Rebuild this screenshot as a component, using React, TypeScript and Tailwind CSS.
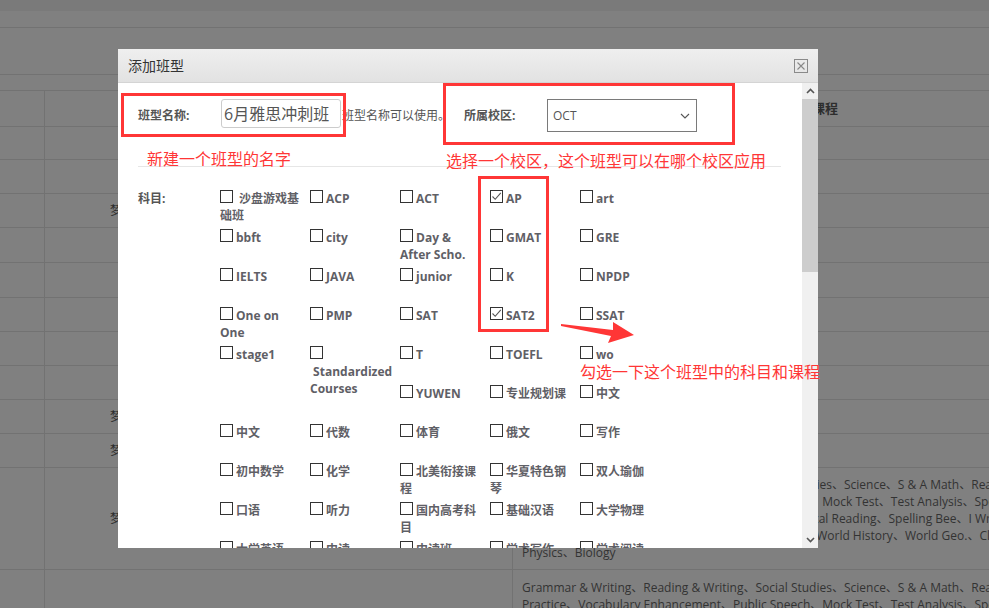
import React from 'react';

type Item = { label: string; checked?: boolean } | null;

const rows: Item[][] = [
  [{ label: '\u00a0沙盘游戏基础班' }, { label: 'ACP' }, { label: 'ACT' }, { label: 'AP', checked: true }, { label: 'art' }],
  [{ label: 'bbft' }, { label: 'city' }, { label: 'Day & After Scho.' }, { label: 'GMAT' }, { label: 'GRE' }],
  [{ label: 'IELTS' }, { label: 'JAVA' }, { label: 'junior' }, { label: 'K' }, { label: 'NPDP' }],
  [{ label: 'One on One' }, { label: 'PMP' }, { label: 'SAT' }, { label: 'SAT2', checked: true }, { label: 'SSAT' }],
  [{ label: 'stage1' }, { label: '\u00a0Standardized Courses' }, { label: 'T' }, { label: 'TOEFL' }, { label: 'wo' }],
  [null, null, { label: 'YUWEN' }, { label: '专业规划课' }, { label: '中文' }],
  [{ label: '中文' }, { label: '代数' }, { label: '体育' }, { label: '俄文' }, { label: '写作' }],
  [{ label: '初中数学' }, { label: '化学' }, { label: '北美衔接课程' }, { label: '华夏特色钢琴' }, { label: '双人瑜伽' }],
  [{ label: '口语' }, { label: '听力' }, { label: '国内高考科目' }, { label: '基础汉语' }, { label: '大学物理' }],
  [{ label: '大学英语' }, { label: '中读' }, { label: '中读班' }, { label: '学术写作' }, { label: '学术阅读' }],
];

// background table rows (heights in px, border included)
const bgRows = [
  { h: 'h-[33px]' },
  { h: 'h-[34px]' },
  { h: 'h-[34px]', name: true },
  { h: 'h-[35px]' },
  { h: 'h-[35px]' },
  { h: 'h-[34px]' },
  { h: 'h-[34px]' },
  { h: 'h-[34px]' },
  { h: 'h-[34px]', name: true },
  { h: 'h-[34px]', name: true },
];

const courseLines = [
  'Grammar & Writing、Reading & Writing、Social Studies、Science、S & A Math、Reading',
  'Practice、Vocabulary Enhancement、Public Speech、Mock Test、Test Analysis、Speaking',
  'Grammar、Reading Comprehension、Writing、Critical Reading、Spelling Bee、I Write',
  'Algebra、Geometry、Creative Writing、US History、World History、World Geo.、Classics',
  'Physics、Biology',
];

const Checkbox = ({ checked }: { checked?: boolean }) => (
  <span className="relative inline-block w-[13px] h-[13px] border border-[#333] bg-white mr-[3px]">
    {checked && (
      <svg className="absolute left-0 top-0" width="11" height="11" viewBox="0 0 11 11">
        <path d="M1.5 5.5 L4.2 8.3 L9.8 1.8" fill="none" stroke="#555" strokeWidth="1.1" />
      </svg>
    )}
  </span>
);

export default function App() {
  return (
    <div className="relative w-[989px] h-[608px] overflow-hidden bg-[#808080] font-['Open_Sans','Noto_Sans_CJK_SC',sans-serif] text-[12px]">
      {/* page behind the overlay */}
      <div className="h-[11px] bg-[#7a7a7a]" />
      <div className="h-[17px] border-b border-[#727272]" />
      <div className="h-[47px] border-b border-[#727272]" />
      <div className="h-[16px] border-b border-[#727272]" />
      <div className="flex h-[36px] border-b border-[#727272]">
        <div className="w-[45px] shrink-0 border-r border-[#727272]" />
        <div className="w-[468px] shrink-0 border-r border-[#727272]" />
        <div className="flex-1 flex items-center pl-[299px] text-[13px] font-bold text-[#2d2d2d]">课程</div>
      </div>
      {bgRows.map((r, i) => (
        <div key={i} className={`flex ${r.h} border-b border-[#727272]`}>
          <div className="w-[45px] shrink-0 border-r border-[#727272]" />
          <div className="w-[468px] shrink-0 border-r border-[#727272] flex items-center pl-[65px] text-[#2d2d2d]">
            {r.name ? '梦想营' : ''}
          </div>
          <div className="flex-1" />
        </div>
      ))}
      <div className="flex h-[102px] border-b border-[#727272]">
        <div className="w-[45px] shrink-0 border-r border-[#727272]" />
        <div className="w-[468px] shrink-0 border-r border-[#727272] flex items-center pl-[65px] text-[#2d2d2d]">梦想营</div>
        <div className="flex-1 flex flex-col justify-center pl-[9px] leading-[17px] text-[#333] whitespace-nowrap">
          {courseLines.map((l) => (
            <div key={l}>{l}</div>
          ))}
        </div>
      </div>
      <div className="flex h-[60px]">
        <div className="w-[45px] shrink-0 border-r border-[#727272]" />
        <div className="w-[468px] shrink-0 border-r border-[#727272]" />
        <div className="flex-1 pt-[9px] pl-[9px] leading-[17px] text-[#333] whitespace-nowrap">
          <div>{courseLines[0]}</div>
          <div>{courseLines[1]}</div>
        </div>
      </div>

      {/* modal */}
      <div className="absolute left-[118px] top-[49px] w-[700px] h-[499px] bg-white flex flex-col">
        <div className="h-[34px] shrink-0 flex items-center justify-between pl-[10px] pr-[10px] border-b border-[#d4d4d4] bg-gradient-to-b from-[#efefef] to-[#e2e2e2]">
          <span className="text-[14px] text-[#333]">添加班型</span>
          <span className="w-[14px] h-[14px] border border-[#8a8a8a] flex items-center justify-center">
            <svg width="10" height="10" viewBox="0 0 10 10">
              <path d="M1.5 1.5 L8.5 8.5 M8.5 1.5 L1.5 8.5" stroke="#888" strokeWidth="1.1" />
            </svg>
          </span>
        </div>
        <div className="flex flex-1 min-h-0">
          <div className="flex-1 overflow-hidden text-[#555]">
            <div className="flex pt-[16px] pl-[20px] h-[49px]">
              <div className="w-[83px] h-[33px] flex items-center font-bold">班型名称:</div>
              <div className="w-[120px] h-[29px] border border-[#ccc] rounded-[3px] flex items-center pl-[2px] text-[16px] text-[#555]">
                6月雅思冲刺班
              </div>
              <div className="h-[33px] flex items-center ml-[1px] w-[122px]">班型名称可以使用。</div>
              <div className="w-[83px] h-[33px] flex items-center font-bold">所属校区:</div>
              <div className="w-[150px] h-[33px] border border-[#7a7a7a] flex items-center justify-between pl-[5px] pr-[6px]">
                <span>OCT</span>
                <svg width="10" height="6" viewBox="0 0 10 6">
                  <path d="M1 1 L5 5 L9 1" fill="none" stroke="#555" strokeWidth="1.1" />
                </svg>
              </div>
            </div>
            <div className="mt-[34px] ml-[20px] w-[643px] h-px bg-[#e6e6e6]" />
            <div className="flex pt-[23px] pl-[20px]">
              <div className="w-[82px] font-bold leading-[17px]">科目:</div>
              <div className="grid grid-cols-[repeat(5,90px)] auto-rows-[39px]">
                {rows.flat().map((it, i) =>
                  it ? (
                    <div key={i} className="w-[80px] leading-[17px] font-bold text-[#5f6066]">
                      <Checkbox checked={it.checked} />
                      {it.label}
                    </div>
                  ) : (
                    <div key={i} />
                  )
                )}
              </div>
            </div>
          </div>
          <div className="w-[16px] shrink-0 flex flex-col bg-[#f0f0f0]">
            <div className="h-[16px] flex items-center justify-center">
              <svg width="9" height="6" viewBox="0 0 9 6">
                <path d="M1 5 L4.5 1.5 L8 5" fill="none" stroke="#555" strokeWidth="1.6" />
              </svg>
            </div>
            <div className="h-[173px] bg-[#cdcdcd]" />
            <div className="flex-1" />
            <div className="h-[16px] flex items-center justify-center">
              <svg width="9" height="6" viewBox="0 0 9 6">
                <path d="M1 1 L4.5 4.5 L8 1" fill="none" stroke="#555" strokeWidth="1.6" />
              </svg>
            </div>
          </div>
        </div>
      </div>

      {/* red annotations drawn over the screenshot */}
      <div className="absolute left-[121px] top-[93px] w-[225px] h-[44px] border-[3px] border-[#ff3636]" />
      <div className="absolute left-[443px] top-[83px] w-[292px] h-[62px] border-[3px] border-[#ff3636]" />
      <div className="absolute left-[478px] top-[176px] w-[71px] h-[156px] border-[3px] border-[#ff3636]" />
      <div className="absolute left-[147px] top-[149px] text-[16px] leading-[20px] text-[#ff3636] whitespace-nowrap">
        新建一个班型的名字
      </div>
      <div className="absolute left-[446px] top-[151px] text-[16px] leading-[20px] text-[#ff3636] whitespace-nowrap">
        选择一个校区，这个班型可以在哪个校区应用
      </div>
      <div className="absolute left-[580px] top-[362px] text-[16px] leading-[20px] text-[#ff3636] whitespace-nowrap">
        勾选一下这个班型中的科目和课程
      </div>
      <svg className="absolute left-[556px] top-[316px]" width="82" height="30" viewBox="0 0 82 30">
        <polygon points="5,8 57,14 57,6 78,19 52,27 55,20 5,10" fill="#ff3636" />
      </svg>
    </div>
  );
}
